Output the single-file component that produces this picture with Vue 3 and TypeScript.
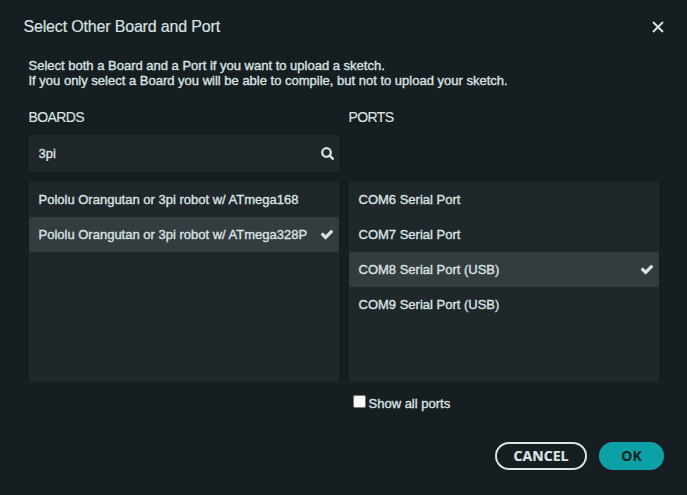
<script setup lang="ts">
import { ref } from 'vue'

interface Item {
  id: string
  label: string
}

const boards: Item[] = [
  { id: 'atmega168', label: 'Pololu Orangutan or 3pi robot w/ ATmega168' },
  { id: 'atmega328p', label: 'Pololu Orangutan or 3pi robot w/ ATmega328P' },
]
const ports: Item[] = [
  { id: 'COM6', label: 'COM6 Serial Port' },
  { id: 'COM7', label: 'COM7 Serial Port' },
  { id: 'COM8', label: 'COM8 Serial Port (USB)' },
  { id: 'COM9', label: 'COM9 Serial Port (USB)' },
]

const query = ref('3pi')
const selectedBoard = ref('atmega328p')
const selectedPort = ref('COM8')
const showAll = ref(false)
</script>

<template>
  <div class="dialog">
    <header class="title-bar">
      <h1 class="title">Select Other Board and Port</h1>
      <button class="close" type="button">
        <svg viewBox="0 0 12 12" width="12" height="12">
          <path d="M1 1L11 11M11 1L1 11" fill="none" stroke="currentColor" stroke-width="1.9" />
        </svg>
      </button>
    </header>

    <div class="intro">
      <p>Select both a Board and a Port if you want to upload a sketch.</p>
      <p>If you only select a Board you will be able to compile, but not to upload your sketch.</p>
    </div>

    <main class="columns">
      <section class="column">
        <h2 class="heading">BOARDS</h2>
        <div class="search">
          <input v-model="query" class="search-input" type="text" />
          <svg class="icon" viewBox="0 0 13 13" width="13" height="13">
            <circle cx="5.500" cy="5.500" r="4.300" fill="none" stroke="currentColor" stroke-width="2.300" />
            <path d="M8.700 8.700L11.700 11.700" fill="none" stroke="currentColor" stroke-width="2.500" stroke-linecap="round" />
          </svg>
        </div>
        <ul class="list">
          <li
            v-for="b in boards"
            :key="b.id"
            class="row"
            :class="{ selected: b.id === selectedBoard }"
            @click="selectedBoard = b.id"
          >
            <span class="label">{{ b.label }}</span>
            <svg v-if="b.id === selectedBoard" class="icon check" viewBox="0 0 1550 1188" width="12" height="9.200">
              <path
                fill="currentColor"
                d="M1550 232q0 40-28 68l-724 724-136 136q-28 28-68 28t-68-28l-136-136L28 662Q0 634 0 594t28-68l136-136q28-28 68-28t68 28l294 295 656-657q28-28 68-28t68 28l136 136q28 28 28 68z"
              />
            </svg>
          </li>
        </ul>
      </section>

      <section class="column">
        <h2 class="heading">PORTS</h2>
        <div class="spacer"></div>
        <ul class="list">
          <li
            v-for="p in ports"
            :key="p.id"
            class="row"
            :class="{ selected: p.id === selectedPort }"
            @click="selectedPort = p.id"
          >
            <span class="label">{{ p.label }}</span>
            <svg v-if="p.id === selectedPort" class="icon check" viewBox="0 0 1550 1188" width="12" height="9.200">
              <path
                fill="currentColor"
                d="M1550 232q0 40-28 68l-724 724-136 136q-28 28-68 28t-68-28l-136-136L28 662Q0 634 0 594t28-68l136-136q28-28 68-28t68 28l294 295 656-657q28-28 68-28t68 28l136 136q28 28 28 68z"
              />
            </svg>
          </li>
        </ul>
        <label class="show-all">
          <input v-model="showAll" class="checkbox" type="checkbox" />
          <span>Show all ports</span>
        </label>
      </section>
    </main>

    <footer class="actions">
      <button class="btn cancel" type="button">CANCEL</button>
      <button class="btn ok" type="button">OK</button>
    </footer>
  </div>
</template>

<style>
body {
  background: #171e21;
}
</style>

<style scoped>
.dialog {
  box-sizing: border-box;
  width: 687px;
  height: 495px;
  padding: 14px 23px 0;
  display: flex;
  flex-direction: column;
  background: #171e21;
  color: #dae3e3;
  font-family: 'Liberation Sans', Arial, sans-serif;
  font-size: 13px;
  line-height: 15px;
  overflow: hidden;
}
.title-bar {
  display: flex;
  justify-content: space-between;
  align-items: center;
  height: 25px;
}
.title {
  margin: 0 0 0 0.5px;
  font-size: 16px;
  font-weight: 400;
  line-height: 24px;
  letter-spacing: -0.17px;
  -webkit-text-stroke: 0.15px currentColor;
}
.close {
  display: flex;
  margin: 0;
  padding: 0;
  border: 0;
  background: none;
  color: inherit;
}
.intro {
  margin: 19px 0 0 5.5px;
  -webkit-text-stroke: 0.35px currentColor;
  white-space: nowrap;
}
.intro p {
  margin: 0;
}
.columns {
  display: flex;
  gap: 10px;
  margin: 22px 0 0 6px;
}
.column {
  width: 310px;
}
.heading {
  margin: 0 0 10px -0.5px;
  font-size: 14px;
  font-weight: 400;
  line-height: 15px;
  letter-spacing: -0.6px;
  -webkit-text-stroke: 0.15px currentColor;
}
.search {
  box-sizing: border-box;
  display: flex;
  align-items: center;
  height: 37px;
  padding: 0 5px 0 9.5px;
  background: #1f272a;
}
.search-input {
  flex: 1;
  min-width: 0;
  padding: 0;
  border: 0;
  outline: 0;
  background: none;
  color: inherit;
  font: inherit;
  -webkit-text-stroke: 0.35px currentColor;
}
.spacer {
  height: 37px;
}
.list {
  height: 200px;
  margin: 10px 0 0;
  padding: 0;
  list-style: none;
  background: #1f272a;
}
.row {
  box-sizing: border-box;
  display: flex;
  align-items: center;
  justify-content: space-between;
  height: 35px;
  padding: 0 6px 0 9.5px;
}
.label {
  white-space: nowrap;
  -webkit-text-stroke: 0.35px currentColor;
}
.selected {
  background: #353c3f;
}
.icon {
  display: block;
  flex: none;
}
.check {
  overflow: visible;
  stroke: currentColor;
  stroke-width: 50;
}
.show-all {
  display: flex;
  align-items: center;
  gap: 2.5px;
  margin: 13px 0 0 4px;
  height: 17px;
  -webkit-text-stroke: 0.35px currentColor;
}
.checkbox {
  width: 13px;
  height: 13px;
  margin: 0 0 4px;
}
.actions {
  display: flex;
  justify-content: flex-end;
  gap: 12px;
  margin-top: 30px;
}
.btn {
  box-sizing: border-box;
  height: 28px;
  padding: 0;
  border: 2px solid #dae3e3;
  border-radius: 14px;
  background: none;
  color: #dae3e3;
  font: 700 14px/20px 'Open Sans', sans-serif;
}
.cancel {
  width: 92px;
  letter-spacing: 0.1px;
  -webkit-text-stroke: 0.2px currentColor;
}
.ok {
  width: 65px;
  border-color: #0ca1a6;
  background: #0ca1a6;
  color: #171e21;
}
</style>
